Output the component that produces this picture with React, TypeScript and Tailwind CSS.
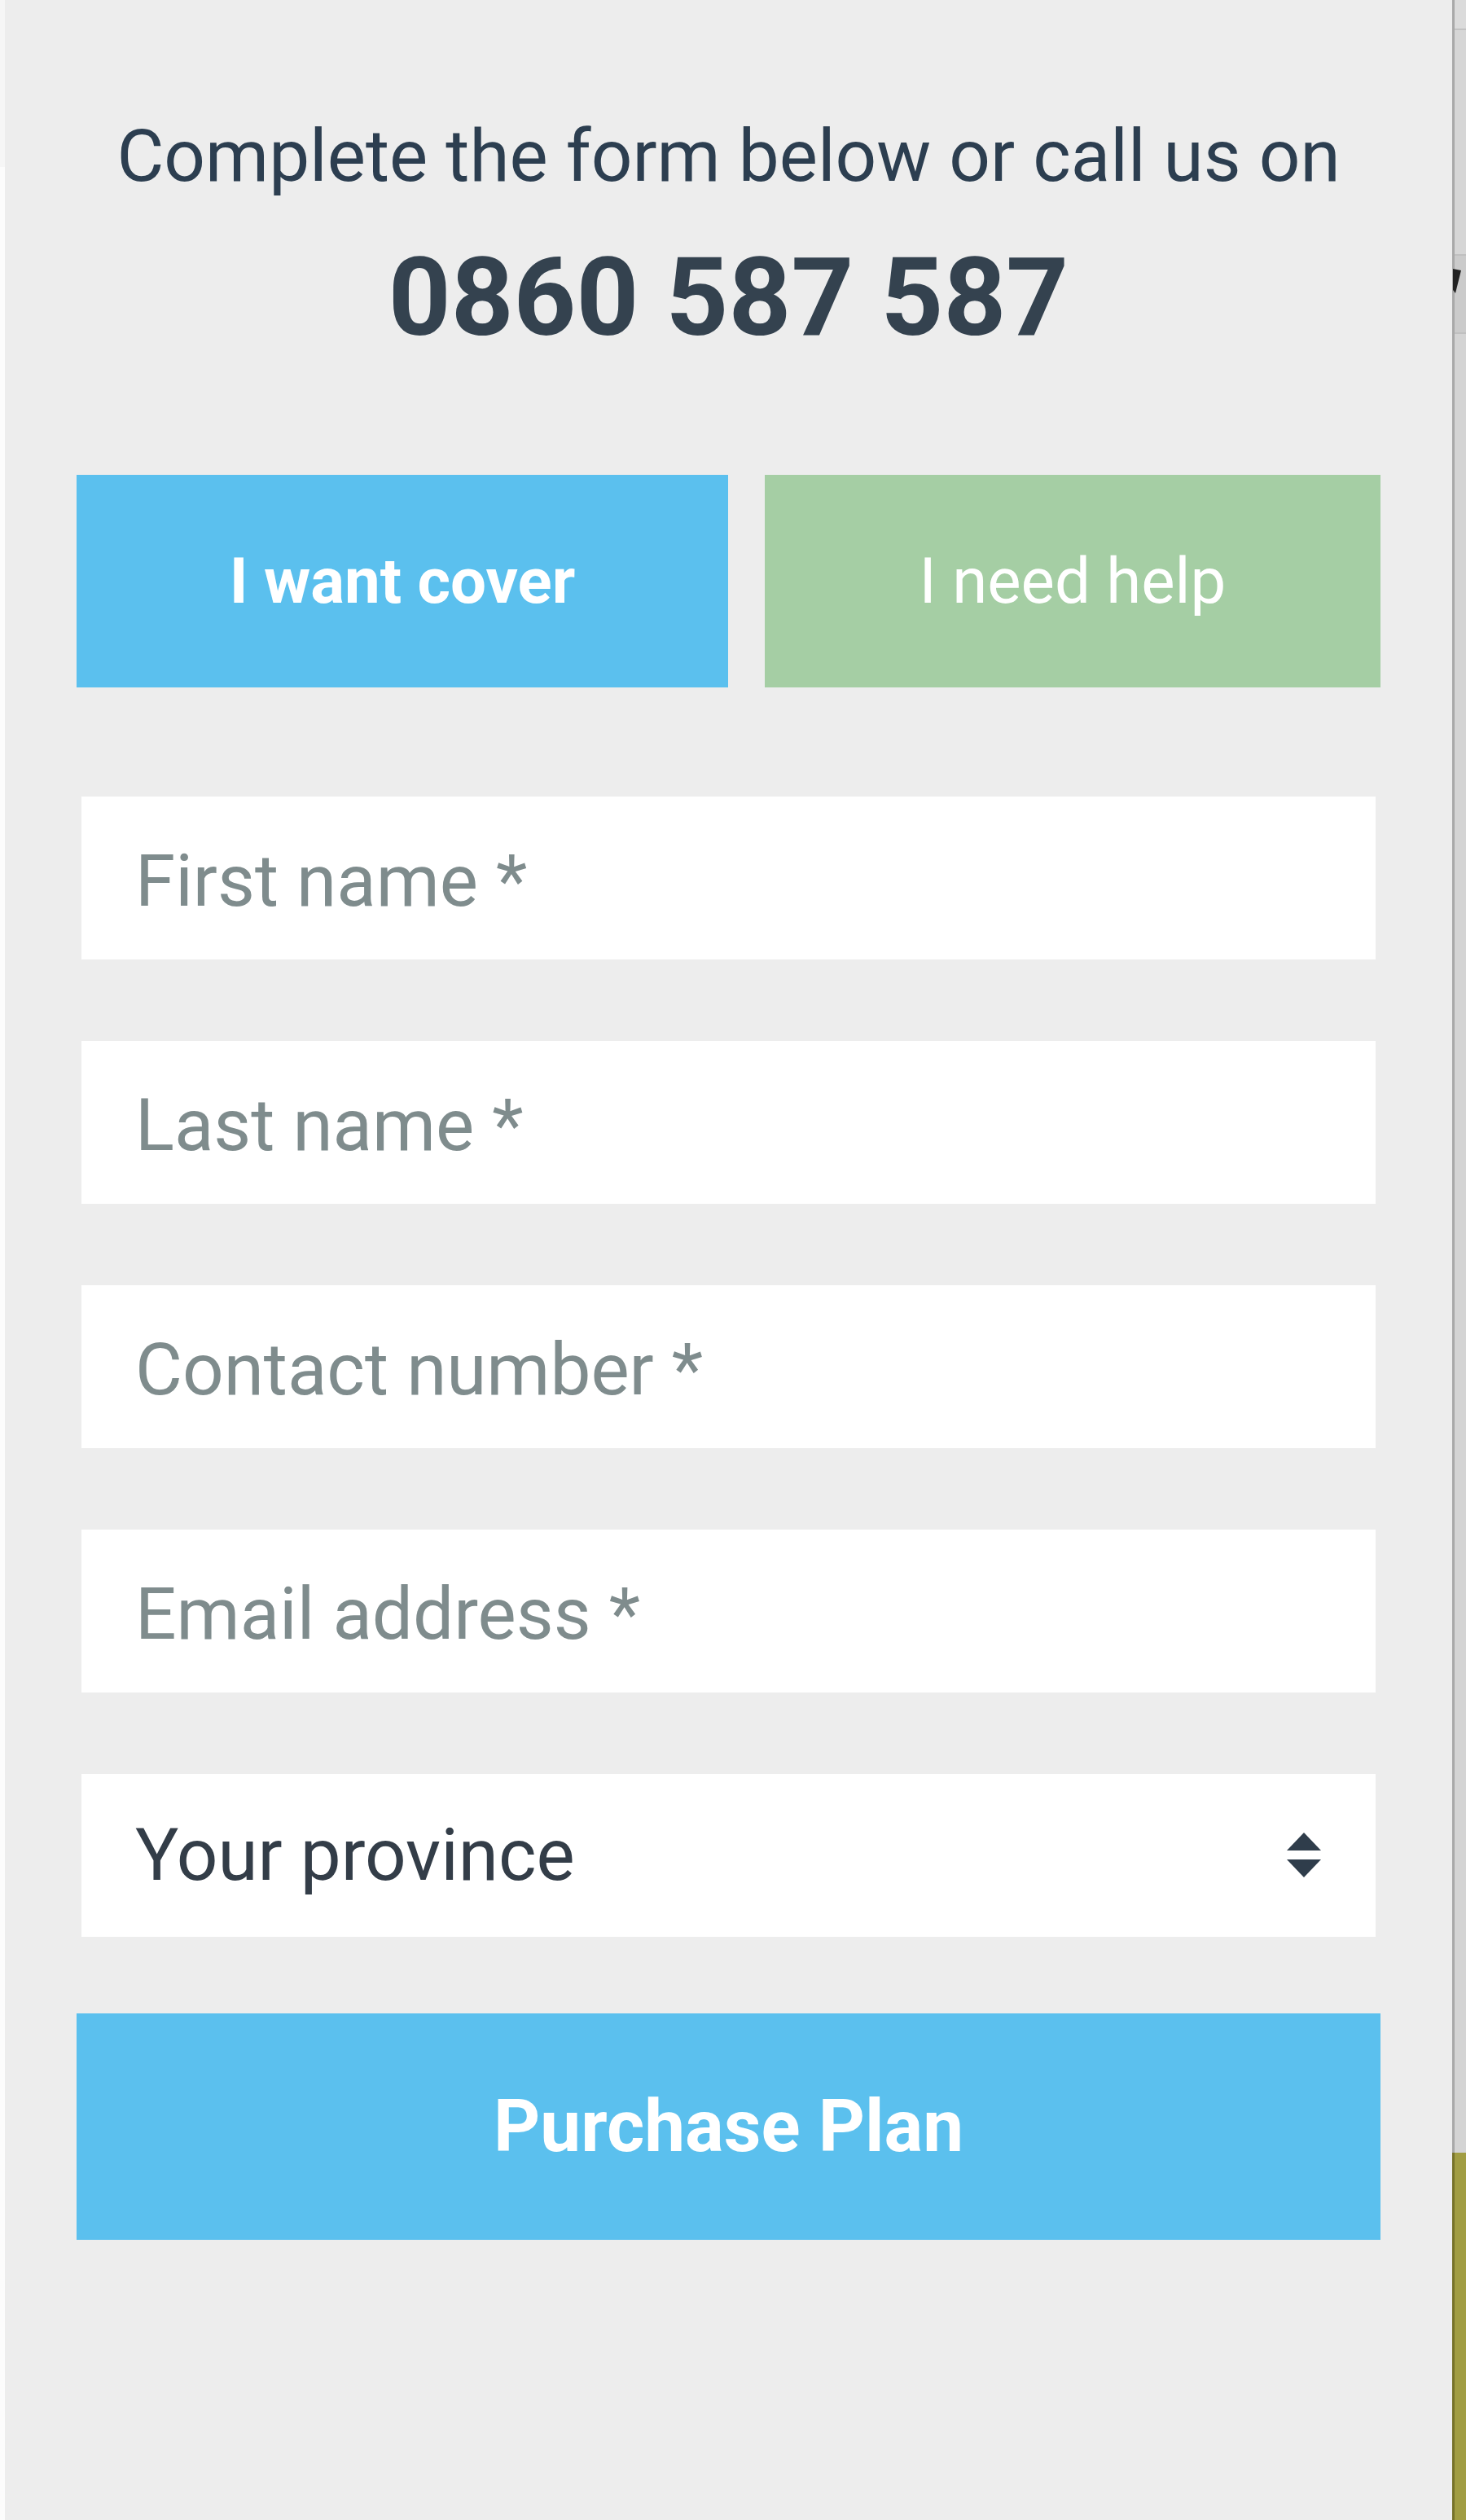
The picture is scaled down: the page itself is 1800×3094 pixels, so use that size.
import React from "react";

const fields = ["First name *", "Last name *", "Contact number *", "Email address *"];

function SortArrows() {
  return (
    <svg width="44" height="56" viewBox="0 0 44 56" className="pointer-events-none">
      <path d="M22 0 L43 22 L1 22 Z" fill="#2f3d4b" />
      <path d="M1 33 L43 33 L22 55 Z" fill="#2f3d4b" />
    </svg>
  );
}

export default function App() {
  return (
    <div className="flex w-[1800px] h-[3094px] font-['Roboto','Liberation_Sans',sans-serif] bg-[#ededed]">
      {/* left edge of the page behind the panel */}
      <div className="flex flex-col w-[6px]">
        <div className="h-[205px] bg-[#f6f6f6]" />
        <div className="flex-1 bg-[#fcfcfc]" />
      </div>

      {/* form panel */}
      <div className="flex flex-col w-[1777px] bg-[#ededed] px-[88px] pt-[139px]">
        <p className="text-center text-[89px] leading-[106px] text-[#2c3e50]">
          Complete the form below or call us on
        </p>
        <p className="mt-[41px] text-center text-[134px] leading-[160px] font-bold text-[#34424f]">
          0860 587 587
        </p>

        <div className="mt-[137px] flex gap-[45px] h-[261px]">
          <button className="w-[800px] bg-[#5bc0ee] text-white text-[78px] font-bold">
            I want cover
          </button>
          <button className="flex-1 bg-[#a5cea4] text-white text-[78px]">
            I need help
          </button>
        </div>

        <div className="mt-[134px] mx-[6px] flex flex-col gap-[100px]">
          {fields.map((f) => (
            <input
              key={f}
              placeholder={f}
              className="h-[200px] w-full bg-white pl-[66px] pt-[6px] text-[89px] text-[#2c3e50] placeholder:text-[#7f8c8d] outline-none"
            />
          ))}
          <div className="relative h-[200px]">
            <select
              defaultValue=""
              className="h-full w-full appearance-none bg-white pl-[66px] text-[89px] text-[#333d48] outline-none"
            >
              <option value="">Your province</option>
            </select>
            <div className="absolute right-[66px] top-[72px]">
              <SortArrows />
            </div>
          </div>
        </div>

        <button className="mt-[94px] h-[278px] w-full bg-[#5bc0ee] text-white text-[89px] font-bold">
          Purchase Plan
        </button>
      </div>

      {/* right edge: page behind the panel */}
      <div className="flex flex-col w-[17px]">
        <div className="h-[35px] border-l-[3px] border-[#a9a9a9] bg-[#dbdbdb]" />
        <div className="h-[2px] border-l-[3px] border-[#a9a9a9] bg-[#c2c2c2]" />
        <div className="h-[275px] border-l-[3px] border-[#a9a9a9] bg-[#d6d6d6]" />
        <div className="h-[2px] border-l-[3px] border-[#a9a9a9] bg-[#c0c0c0]" />
        <div className="relative h-[94px] border-l-[3px] border-[#a9a9a9] bg-[#cbcbcb]">
          <svg width="10" height="30" viewBox="0 0 10 30" className="absolute left-[-2px] top-[16px]">
            <path d="M0 0 L10 2 L3 30 L0 26 Z" fill="#222" />
          </svg>
        </div>
        <div className="h-[2px] border-l-[3px] border-[#a9a9a9] bg-[#c0c0c0]" />
        <div className="h-[2233px] border-l-[3px] border-[#a9a9a9] bg-[#d4d4d4]" />
        <div className="flex-1 border-l-[3px] border-[#77732a] bg-[#a19d43]" />
      </div>
    </div>
  );
}
